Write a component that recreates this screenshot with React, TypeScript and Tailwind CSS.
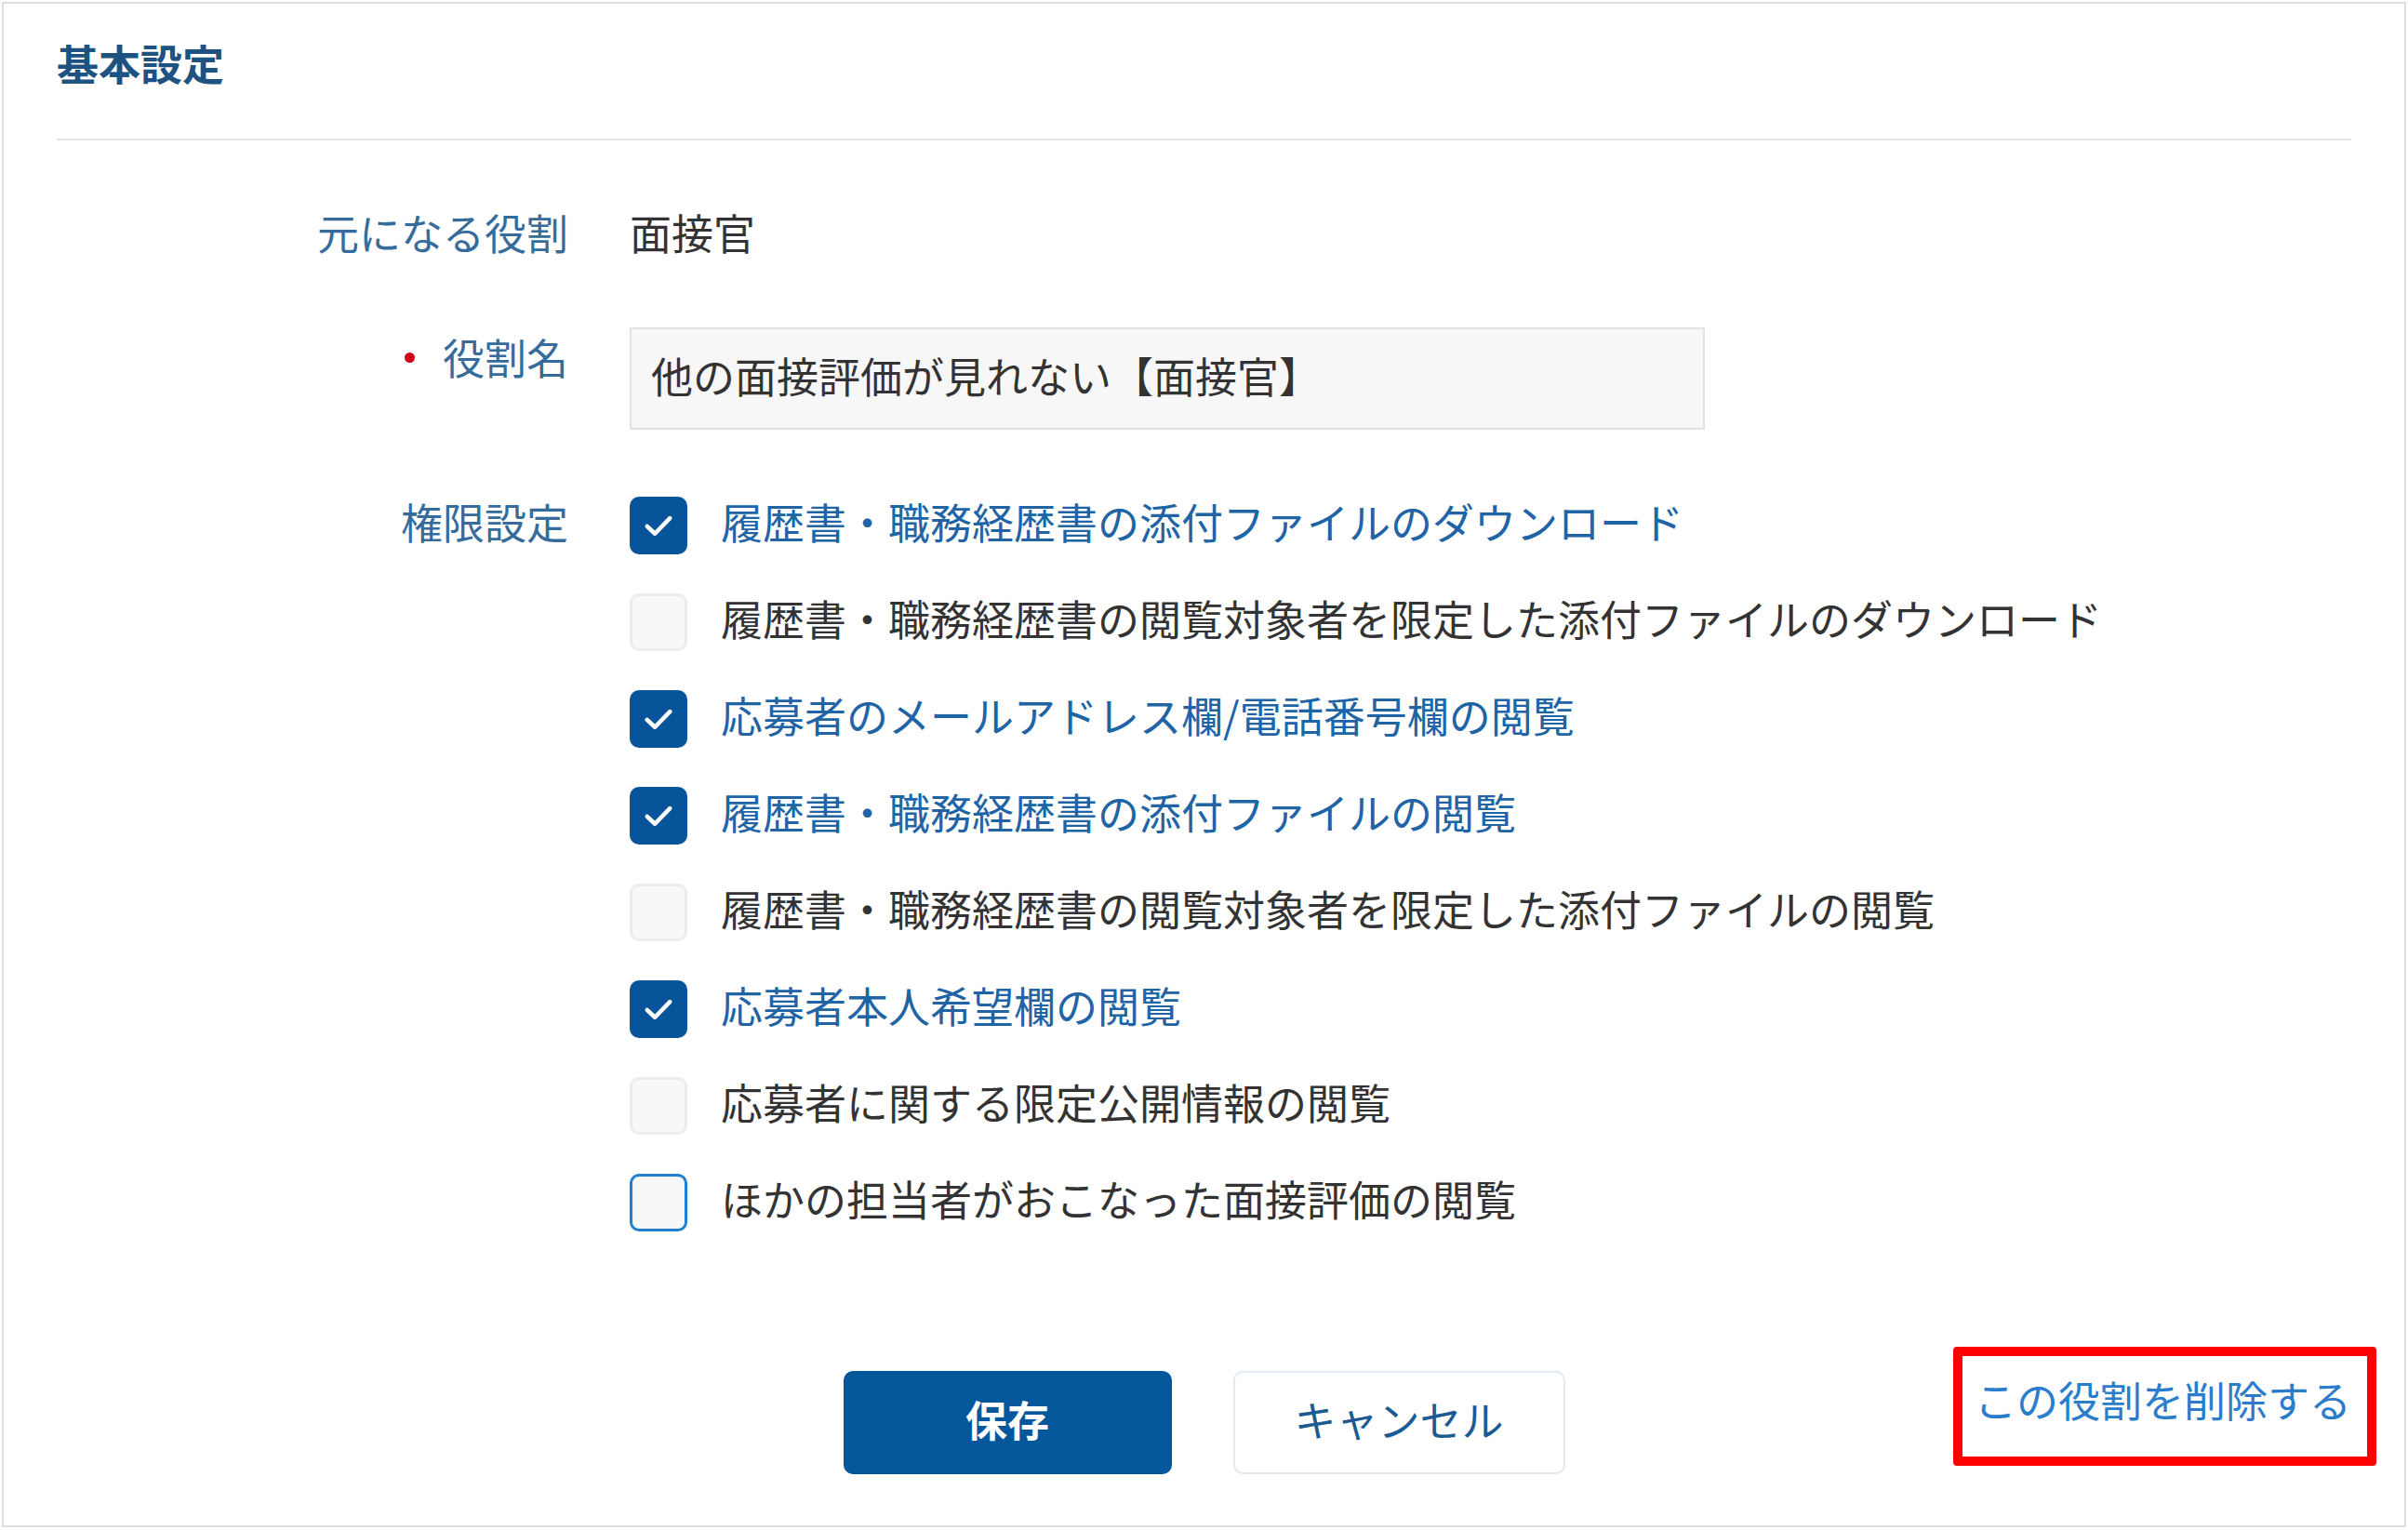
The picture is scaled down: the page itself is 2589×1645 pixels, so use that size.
import React from 'react';

const permissions = [
  { label: '履歴書・職務経歴書の添付ファイルのダウンロード', checked: true },
  { label: '履歴書・職務経歴書の閲覧対象者を限定した添付ファイルのダウンロード', checked: false },
  { label: '応募者のメールアドレス欄/電話番号欄の閲覧', checked: true },
  { label: '履歴書・職務経歴書の添付ファイルの閲覧', checked: true },
  { label: '履歴書・職務経歴書の閲覧対象者を限定した添付ファイルの閲覧', checked: false },
  { label: '応募者本人希望欄の閲覧', checked: true },
  { label: '応募者に関する限定公開情報の閲覧', checked: false },
  { label: 'ほかの担当者がおこなった面接評価の閲覧', checked: false, focused: true },
];

const CheckBox = ({ checked, focused }: { checked: boolean; focused?: boolean }) => {
  if (checked) {
    return (
      <span className="w-[62px] h-[62px] rounded-[10px] bg-[#07549a] flex items-center justify-center shrink-0">
        <svg width="42" height="42" viewBox="0 0 24 24" fill="none" stroke="#ffffff" strokeWidth="2.6" strokeLinecap="round" strokeLinejoin="round">
          <polyline points="5 12.5 9.8 17 19 7.5" />
        </svg>
      </span>
    );
  }
  return (
    <span
      className={`w-[62px] h-[62px] rounded-[10px] bg-[#f8f8f8] shrink-0 border-[3px] ${
        focused ? 'border-[#1f7fd0]' : 'border-[#ececec]'
      }`}
    />
  );
};

const App: React.FC = () => {
  return (
    <div className="h-[1645px] overflow-hidden bg-white p-[2px] text-[45px] leading-[60px] text-[#333333] font-['Noto_Sans_CJK_JP','Noto_Sans',sans-serif]">
      <div className="h-[1640px] border-2 border-[#dedede] px-[57px]">
        <div className="pt-[34px] pb-[51px]">
          <h2 className="font-bold text-[#1d5281] leading-[60px]">基本設定</h2>
        </div>
        <div className="h-[2px] bg-[#e6e6e6]" />

        <div className="mt-[72px] grid grid-cols-[550px_1fr] gap-x-[66px]">
          <div className="h-[60px] pb-[6px] leading-[54px] text-right text-[#356c9c]">元になる役割</div>
          <div className="h-[60px] pb-[6px] leading-[54px]">面接官</div>

          <div className="mt-[69px] pt-[2px] flex justify-end items-start text-[#356c9c]">
            <span className="flex items-center h-[60px] gap-[30px]">
              <span className="w-[11px] h-[11px] rounded-full bg-[#d0021b]" />
              役割名
            </span>
          </div>
          <div className="mt-[69px]">
            <div className="w-[1156px] h-[110px] bg-[#f7f7f7] border-2 border-[#e2e2e2] px-[21px] pb-[6px] flex items-center">
              他の面接評価が見れない【面接官】
            </div>
          </div>

          <div className="mt-[51px] h-[104px] pb-[8px] flex items-center justify-end text-[#356c9c]">権限設定</div>
          <div className="mt-[51px] flex flex-col">
            {permissions.map((p) => (
              <label key={p.label} className="h-[104px] flex items-center gap-[36px]">
                <CheckBox checked={p.checked} focused={p.focused} />
                <span className={`pb-[8px] ${p.checked ? 'text-[#2064a6]' : 'text-[#333333]'}`}>{p.label}</span>
              </label>
            ))}
          </div>
        </div>

        <div className="mt-[129px] grid grid-cols-[1fr_auto_1fr] items-start">
          <div />
          <div className="flex gap-[66px]">
            <button className="w-[353px] h-[111px] pb-[8px] rounded-[10px] bg-[#03579a] text-white font-bold">保存</button>
            <button className="w-[357px] h-[111px] pb-[8px] rounded-[10px] bg-white border-2 border-[#e1e9f2] text-[#1b5b93]">キャンセル</button>
          </div>
          <div className="flex justify-end mr-[-27px] mt-[-26px]">
            <div className="w-[455px] h-[128px] border-[10px] border-[#ff0000] rounded-[4px] flex items-center justify-center">
              <a className="text-[#2a7dcb] pr-[4px] pb-[14px]">この役割を削除する</a>
            </div>
          </div>
        </div>
      </div>
    </div>
  );
};

export default App;
